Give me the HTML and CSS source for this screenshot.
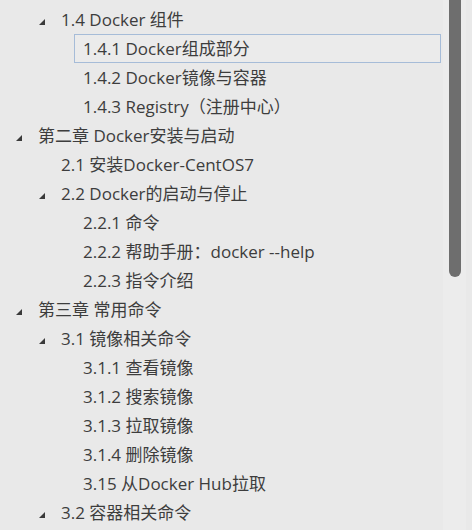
FILE: index.html
```html
<!DOCTYPE html>
<html lang="zh">
<head>
<meta charset="utf-8">
<link rel="stylesheet" href="styles.css">
</head>
<body>
<div class="panel">
  <ul class="tree">
    <li class="row l1"><span class="tri"></span><span class="label">1.4 Docker 组件</span></li>
    <li class="row l2 sel"><span class="label">1.4.1 Docker组成部分</span></li>
    <li class="row l2"><span class="label">1.4.2 Docker镜像与容器</span></li>
    <li class="row l2"><span class="label">1.4.3 Registry（注册中心）</span></li>
    <li class="row l0"><span class="tri"></span><span class="label">第二章 Docker安装与启动</span></li>
    <li class="row l1"><span class="label">2.1 安装Docker-CentOS7</span></li>
    <li class="row l1"><span class="tri"></span><span class="label">2.2 Docker的启动与停止</span></li>
    <li class="row l2"><span class="label">2.2.1 命令</span></li>
    <li class="row l2"><span class="label">2.2.2 帮助手册：docker --help</span></li>
    <li class="row l2"><span class="label">2.2.3 指令介绍</span></li>
    <li class="row l0"><span class="tri"></span><span class="label">第三章 常用命令</span></li>
    <li class="row l1"><span class="tri"></span><span class="label">3.1 镜像相关命令</span></li>
    <li class="row l2"><span class="label">3.1.1 查看镜像</span></li>
    <li class="row l2"><span class="label">3.1.2 搜索镜像</span></li>
    <li class="row l2"><span class="label">3.1.3 拉取镜像</span></li>
    <li class="row l2"><span class="label">3.1.4 删除镜像</span></li>
    <li class="row l2"><span class="label">3.15 从Docker Hub拉取</span></li>
    <li class="row l1"><span class="tri"></span><span class="label">3.2 容器相关命令</span></li>
  </ul>
  <div class="scrollbar"><div class="thumb"></div></div>
</div>
</body>
</html>
```
FILE: styles.css
```css
html, body {
  margin: 0;
  padding: 0;
  background: #e9e9e9;
}
body {
  width: 472px;
  height: 530px;
  overflow: hidden;
  font-family: "Open Sans", "Noto Sans CJK SC", sans-serif;
  font-size: 17px;
  color: #3d3d3d;
}
.panel {
  display: flex;
  height: 530px;
}
.tree {
  list-style: none;
  margin: 0;
  padding: 5px 0 0 0;
  flex: 1;
}
.row {
  height: 29px;
  display: flex;
  align-items: center;
  position: relative;
  white-space: nowrap;
  box-sizing: border-box;
}
.label {
  position: relative;
  top: -1px;
}
.l0 { padding-left: 38px; }
.l1 { padding-left: 61px; }
.l2 { padding-left: 83px; }
.tri {
  position: absolute;
  top: 14px;
  width: 0;
  height: 0;
  border-style: solid;
  border-width: 0 0 6px 6px;
  border-color: transparent transparent #3a3a3a transparent;
}
.l0 .tri { left: 16px; }
.l1 .tri { left: 39px; }
.sel {
  margin-left: 74px;
  padding-left: 8px;
  margin-right: 2px;
  border: 1px solid #a6bcd8;
  background: #ebebeb;
}
.scrollbar {
  width: 23px;
  margin-right: 6px;
  background: #ececec;
  display: flex;
  justify-content: center;
}
.thumb {
  width: 12px;
  height: 277px;
  background: #6e6e6e;
  border-radius: 0 0 6px 6px;
}
```
